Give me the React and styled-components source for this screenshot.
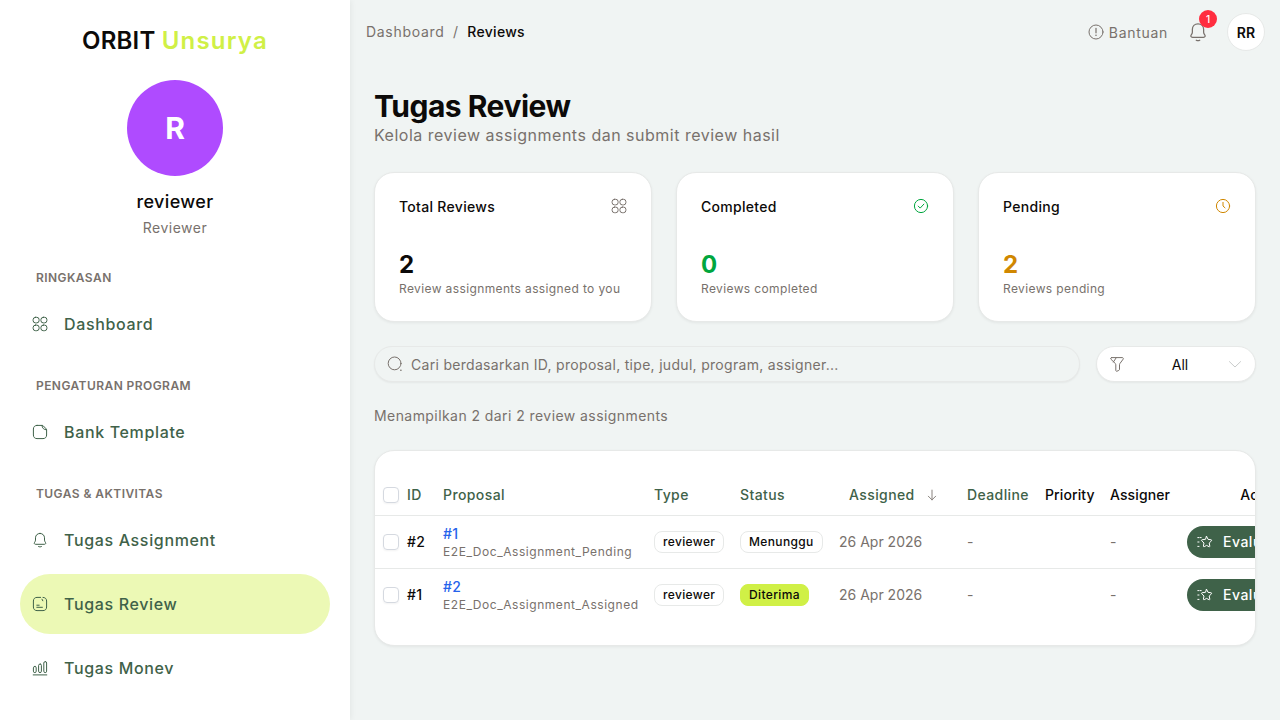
import React from "react";
import styled, { createGlobalStyle } from "styled-components";

const GlobalStyle = createGlobalStyle`
  html, body {
    margin: 0;
    height: 100%;
    overflow: hidden;
  }
  body {
    font-family: "Inter", "Open Sans", sans-serif;
    background: #f0f4f3;
    color: #0c0a09;
  }
  * {
    box-sizing: border-box;
  }
`;

const green = "#3f6249";
const gray = "#78716c";

const Svg = ({ size = 16, sw = 1, children, color }) => (
  <svg width={size} height={size} viewBox="0 0 16 16" fill="none" stroke={color || "currentColor"} strokeWidth={sw} strokeLinecap="round" strokeLinejoin="round">
    {children}
  </svg>
);

const CategoryIcon = (p) => (
  <Svg {...p}>
    <rect x="1.1" y="1.3" width="6" height="5.6" rx="2.4" />
    <rect x="8.9" y="1.3" width="6" height="5.6" rx="2.4" />
    <rect x="1.1" y="9.1" width="6" height="5.6" rx="2.4" />
    <rect x="8.9" y="9.1" width="6" height="5.6" rx="2.4" />
  </Svg>
);

const NoteIcon = (p) => (
  <Svg {...p}>
    <path d="M5 1.4h5.2c.4 0 .8.2 1.1.5l2.8 2.9c.3.3.5.7.5 1.1V11c0 2.2-1.4 3.6-3.6 3.6H5c-2.2 0-3.6-1.4-3.6-3.6V5C1.4 2.8 2.8 1.4 5 1.4z" />
    <path d="M10 1.5c0 2.6 1.8 4.3 4.5 4.3" />
  </Svg>
);

const BellIcon = (p) => (
  <Svg {...p}>
    <path d="M8 1.4C5.3 1.4 3.5 3.4 3.5 5.8v2.3c0 .8-.4 1.5-.9 2.2-.7 1-.3 2 1 2h8.8c1.3 0 1.7-1 1-2-.5-.7-.9-1.4-.9-2.2V5.8c0-2.4-1.8-4.4-4.5-4.4z" />
    <path d="M6.6 14.6c.8.4 2 .4 2.8 0" />
  </Svg>
);

const ReviewIcon = (p) => (
  <Svg {...p}>
    <path d="M8.6 1.4H5C2.8 1.4 1.4 2.8 1.4 5v6c0 2.2 1.4 3.6 3.6 3.6h6c2.2 0 3.6-1.4 3.6-3.6V5c0-2.2-1.4-3.6-3.6-3.6" />
    <path d="M10 3.2 10.8 4.8" />
    <path d="M4.8 9.2h2.4M4.8 11.3h5.6" />
  </Svg>
);

const ChartIcon = (p) => (
  <Svg {...p}>
    <rect x="1.4" y="6.4" width="2.8" height="6.2" rx="1.4" />
    <rect x="6.6" y="4" width="2.8" height="8.6" rx="1.4" />
    <rect x="11.8" y="1.6" width="2.8" height="11" rx="1.4" />
    <path d="M1.2 14.9h13.6" />
  </Svg>
);

const CheckCircleIcon = (p) => (
  <Svg {...p}>
    <circle cx="8" cy="8" r="6.6" />
    <path d="M5.2 8.1 7.2 10.1 10.9 6.1" />
  </Svg>
);

const ClockIcon = (p) => (
  <Svg {...p}>
    <circle cx="8" cy="8" r="6.6" />
    <path d="M8 4.4V8l2 1.8" />
  </Svg>
);

const SearchIcon = (p) => (
  <Svg {...p}>
    <circle cx="7.6" cy="7.4" r="6.4" />
    <path d="M13.8 14.2h.2" strokeWidth="1.4" />
  </Svg>
);

const FunnelIcon = (p) => (
  <Svg {...p}>
    <path d="M2.6 1.6h10.8c.8 0 1.2.8.8 1.5l-3.4 4.6c-.2.3-.3.6-.3 1v4.7c0 .5-.3.8-.7 1l-1.8.8c-.6.3-1.2-.2-1.2-.8V8.7c0-.4-.1-.7-.3-1L1.8 3.1c-.4-.7 0-1.5.8-1.5z" />
    <path d="M7.2 1.8 4.4 6" />
  </Svg>
);

const ChevronIcon = (p) => (
  <Svg {...p}>
    <path d="M2.4 5.6 8 11l5.6-5.4" />
  </Svg>
);

const InfoIcon = (p) => (
  <Svg {...p}>
    <circle cx="8" cy="8" r="7" />
    <path d="M8 4.4v4.4" strokeWidth="1.2" />
    <path d="M8 11.2h.01" strokeWidth="1.6" />
  </Svg>
);

const ArrowDownIcon = (p) => (
  <Svg {...p}>
    <path d="M8 2.4v11.2M3.8 9.4 8 13.6l4.2-4.2" />
  </Svg>
);

const StarIcon = (p) => (
  <Svg {...p}>
    <path d="M9.6 2.4 11 5.3l3.2.5c.5.1.7.6.3 1l-2.3 2.2.6 3.1c.1.5-.4.9-.8.6l-2.4-1.3-2.4 1.3c-.4.2-.9-.1-.8-.6l.6-3.1L4.7 6.8c-.4-.4-.2-.9.3-1l3.2-.5z" />
    <path d="M.8 3.6h3.4M.8 8h1.6M.8 12.4h1.6" strokeDasharray="1.2 1.2" />
  </Svg>
);

const Layout = styled.div`
  display: flex;
  height: 720px;
  width: 1280px;
  overflow: hidden;
`;

const Sidebar = styled.aside`
  width: 350px;
  flex: none;
  height: 100%;
  background: #fff;
  box-shadow: 1px 0 6px rgba(0, 0, 0, 0.06);
  padding: 23px 20px 0;
  display: flex;
  flex-direction: column;
  overflow: hidden;
`;

const Logo = styled.div`
  font-size: 24px;
  line-height: 36px;
  font-weight: 600;
  text-align: center;
  letter-spacing: 0.2px;
  color: #0c0a09;
  span {
    letter-spacing: 1.2px;
    color: #d0f046;
  }
`;

const Profile = styled.div`
  margin-top: 21px;
  margin-bottom: 8px;
  display: flex;
  flex-direction: column;
  align-items: center;
`;

const Avatar = styled.div`
  width: 96px;
  height: 96px;
  border-radius: 50%;
  background: #af4bff;
  color: #fff;
  font-size: 30px;
  font-weight: 700;
  display: flex;
  align-items: center;
  justify-content: center;
`;

const Name = styled.div`
  margin-top: 12px;
  font-size: 18px;
  line-height: 27px;
  font-weight: 500;
  letter-spacing: 0.37px;
`;

const Role = styled.div`
  margin-top: 2px;
  font-size: 14px;
  line-height: 21px;
  letter-spacing: 0.5px;
  color: ${gray};
`;

const SectionLabel = styled.div`
  margin: 24px 16px 8px;
  font-size: 12px;
  line-height: 16px;
  font-weight: 600;
  letter-spacing: 0.43px;
  text-transform: uppercase;
  color: ${gray};
`;

const NavItem = styled.div`
  height: 60px;
  border-radius: 30px;
  padding-left: 12px;
  display: flex;
  flex: none;
  align-items: center;
  gap: 16px;
  font-size: 16px;
  font-weight: 500;
  letter-spacing: 0.65px;
  color: ${green};
  background: ${(p) => (p.$active ? "#ecf9b5" : "transparent")};
  & + & {
    margin-top: 4px;
  }
`;

const Main = styled.main`
  flex: 1;
  min-width: 0;
`;

const Topbar = styled.header`
  height: 64px;
  padding: 0 15px 0 16px;
  display: flex;
  align-items: center;
  justify-content: space-between;
`;

const Crumbs = styled.nav`
  display: flex;
  align-items: center;
  gap: 8.5px;
  margin-top: -2px;
  font-size: 14px;
  letter-spacing: 0.7px;
  color: ${gray};
  b {
    font-weight: 500;
    letter-spacing: 0.3px;
    color: #0c0a09;
  }
`;

const TopActions = styled.div`
  display: flex;
  align-items: center;
`;

const Help = styled.div`
  display: flex;
  align-items: center;
  gap: 5px;
  font-size: 14px;
  letter-spacing: 0.7px;
  color: ${gray};
`;

const BellButton = styled.div`
  position: relative;
  margin-left: 20px;
  width: 20px;
  height: 20px;
  color: ${gray};
`;

const Badge = styled.span`
  position: absolute;
  top: -12px;
  left: 11px;
  width: 18px;
  height: 18px;
  border-radius: 50%;
  background: #ff2d3f;
  color: #fff;
  font-size: 10px;
  font-weight: 500;
  display: flex;
  align-items: center;
  justify-content: center;
`;

const UserChip = styled.div`
  margin-left: 19px;
  width: 38px;
  height: 38px;
  border-radius: 50%;
  background: #fff;
  border: 1px solid #e7e9e8;
  font-size: 14px;
  font-weight: 600;
  display: flex;
  align-items: center;
  justify-content: center;
`;

const Content = styled.div`
  padding: 24px 24px 0;
`;

const Title = styled.h1`
  margin: 0;
  font-size: 30px;
  line-height: 36px;
  font-weight: 700;
  letter-spacing: -0.5px;
`;

const Subtitle = styled.p`
  margin: -1px 0 0;
  padding-bottom: 1px;
  font-size: 16px;
  line-height: 24px;
  letter-spacing: 0.5px;
  color: ${gray};
`;

const Cards = styled.div`
  margin-top: 24px;
  display: grid;
  grid-template-columns: repeat(3, 1fr);
  gap: 24px;
`;

const Card = styled.div`
  height: 150px;
  padding: 23px 24px 24px;
  background: #fff;
  border: 1px solid #e7e9e8;
  border-radius: 20px;
  box-shadow: 0 1px 3px rgba(0, 0, 0, 0.06);
`;

const CardHead = styled.div`
  height: 20px;
  display: flex;
  align-items: center;
  justify-content: space-between;
  font-size: 14px;
  font-weight: 500;
  letter-spacing: 0.3px;
  color: ${(p) => p.$color || "#0c0a09"};
  span {
    color: #0c0a09;
  }
`;

const CardValue = styled.div`
  margin-top: 33px;
  font-size: 24px;
  line-height: 32px;
  font-weight: 700;
  color: ${(p) => p.$color || "#0c0a09"};
`;

const CardNote = styled.div`
  font-size: 12px;
  line-height: 16px;
  letter-spacing: 0.38px;
  color: ${gray};
`;

const Filters = styled.div`
  margin-top: 24px;
  display: flex;
  gap: 16px;
`;

const SearchBox = styled.div`
  flex: 1;
  height: 36px;
  padding: 0 12px;
  display: flex;
  align-items: center;
  gap: 8px;
  border: 1px solid #e7e9e8;
  border-radius: 18px;
  background: #f0f4f3;
  box-shadow: 0 1px 2px rgba(0, 0, 0, 0.05);
  font-size: 14px;
  letter-spacing: 0.3px;
  color: ${gray};
`;

const Select = styled.div`
  width: 160px;
  height: 36px;
  padding: 0 12px;
  display: flex;
  align-items: center;
  justify-content: space-between;
  background: #fff;
  border: 1px solid #e7e9e8;
  border-radius: 18px;
  box-shadow: 0 1px 2px rgba(0, 0, 0, 0.05);
  font-size: 14px;
  color: #0c0a09;
`;

const SelectValue = styled.span`
  margin-left: 8px;
`;

const Summary = styled.p`
  margin: 24px 0;
  font-size: 14px;
  line-height: 20px;
  letter-spacing: 0.43px;
  color: ${gray};
`;

const TableCard = styled.div`
  padding: 24px 0;
  background: #fff;
  border: 1px solid #e7e9e8;
  border-radius: 20px;
  box-shadow: 0 1px 3px rgba(0, 0, 0, 0.06);
  overflow: hidden;
`;

const Table = styled.table`
  width: 978px;
  table-layout: fixed;
  border-collapse: collapse;
  font-size: 14px;
`;

const Th = styled.th`
  height: 40px;
  padding: 0 ${(p) => (p.$tight ? "0" : "8px")} 0 8px;
  text-align: ${(p) => p.$align || "left"};
  font-weight: 500;
  white-space: nowrap;
  letter-spacing: ${(p) => (p.$dark ? "0.1px" : "0.4px")};
  color: ${(p) => (p.$dark ? "#0c0a09" : green)};
  border-bottom: 1px solid #e7e9e8;
`;

const SortLabel = styled.span`
  display: inline-flex;
  align-items: center;
  gap: 10px;
  padding-left: 10px;
`;

const Td = styled.td`
  height: 53px;
  padding: 0 ${(p) => (p.$tight ? "0" : "8px")} 0 8px;
  white-space: nowrap;
  font-weight: ${(p) => (p.$medium ? 500 : 400)};
  letter-spacing: ${(p) => (p.$medium ? "0.4px" : "0")};
  color: ${(p) => p.$color || "#0c0a09"};
  border-bottom: ${(p) => (p.$last ? "none" : "1px solid #e7e9e8")};
`;

const Check = styled.div`
  width: 16px;
  height: 16px;
  border: 1px solid #d5d9e0;
  border-radius: 4px;
  box-shadow: 0 1px 2px rgba(0, 0, 0, 0.05);
`;

const ProposalLink = styled.div`
  font-size: 14px;
  line-height: 20px;
  font-weight: 500;
  letter-spacing: 0.4px;
  color: #2563eb;
`;

const ProposalName = styled.div`
  font-size: 12px;
  line-height: 16px;
  letter-spacing: 0.55px;
  color: ${gray};
`;

const Pill = styled.span`
  display: inline-block;
  padding: 0 8px;
  height: 22px;
  line-height: 20px;
  font-size: 12px;
  font-weight: 500;
  letter-spacing: 0.36px;
  border-radius: 8px;
  color: #0c0a09;
  border: 1px solid ${(p) => (p.$lime ? "#d0f046" : "#e7e9e8")};
  background: ${(p) => (p.$lime ? "#d0f046" : "#fff")};
`;

const EvalButton = styled.div`
  width: 120px;
  height: 32px;
  padding-left: 10px;
  display: flex;
  align-items: center;
  gap: 10px;
  border-radius: 16px;
  background: ${green};
  color: #fff;
  font-size: 14px;
  font-weight: 500;
  letter-spacing: 0.5px;
`;

const groups = [
  { label: "Ringkasan", items: [{ name: "Dashboard", Icon: CategoryIcon }] },
  { label: "Pengaturan Program", items: [{ name: "Bank Template", Icon: NoteIcon }] },
  {
    label: "Tugas & Aktivitas",
    items: [
      { name: "Tugas Assignment", Icon: BellIcon },
      { name: "Tugas Review", Icon: ReviewIcon, active: true },
      { name: "Tugas Monev", Icon: ChartIcon },
    ],
  },
];

const stats = [
  { title: "Total Reviews", value: "2", note: "Review assignments assigned to you", Icon: CategoryIcon, iconColor: gray },
  { title: "Completed", value: "0", note: "Reviews completed", Icon: CheckCircleIcon, iconColor: "#00a63e", color: "#00a63e" },
  { title: "Pending", value: "2", note: "Reviews pending", Icon: ClockIcon, iconColor: "#d08700", color: "#d08700" },
];

const rows = [
  { id: "#2", link: "#1", name: "E2E_Doc_Assignment_Pending", status: "Menunggu" },
  { id: "#1", link: "#2", name: "E2E_Doc_Assignment_Assigned", status: "Diterima", lime: true, last: true },
];

const colWidths = [24, 36, 211, 86, 99, 128, 78, 65, 77, 174];

export default function App() {
  return (
    <>
      <GlobalStyle />
      <Layout>
        <Sidebar>
          <Logo>
            ORBIT <span>Unsurya</span>
          </Logo>
          <Profile>
            <Avatar>R</Avatar>
            <Name>reviewer</Name>
            <Role>Reviewer</Role>
          </Profile>
          {groups.map((g) => (
            <React.Fragment key={g.label}>
              <SectionLabel>{g.label}</SectionLabel>
              {g.items.map(({ name, Icon, active }) => (
                <NavItem key={name} $active={active}>
                  <Icon />
                  {name}
                </NavItem>
              ))}
            </React.Fragment>
          ))}
        </Sidebar>
        <Main>
          <Topbar>
            <Crumbs>
              <span>Dashboard</span>
              <span>/</span>
              <b>Reviews</b>
            </Crumbs>
            <TopActions>
              <Help>
                <InfoIcon />
                Bantuan
              </Help>
              <BellButton>
                <BellIcon size={20} />
                <Badge>1</Badge>
              </BellButton>
              <UserChip>RR</UserChip>
            </TopActions>
          </Topbar>
          <Content>
            <Title>Tugas Review</Title>
            <Subtitle>Kelola review assignments dan submit review hasil</Subtitle>
            <Cards>
              {stats.map(({ title, value, note, Icon, iconColor, color }) => (
                <Card key={title}>
                  <CardHead $color={iconColor}>
                    <span>{title}</span>
                    <Icon />
                  </CardHead>
                  <CardValue $color={color}>{value}</CardValue>
                  <CardNote>{note}</CardNote>
                </Card>
              ))}
            </Cards>
            <Filters>
              <SearchBox>
                <SearchIcon />
                Cari berdasarkan ID, proposal, tipe, judul, program, assigner...
              </SearchBox>
              <Select>
                <FunnelIcon color={gray} />
                <SelectValue>All</SelectValue>
                <ChevronIcon color="#c9cccb" />
              </Select>
            </Filters>
            <Summary>Menampilkan 2 dari 2 review assignments</Summary>
            <TableCard>
              <Table>
                <colgroup>
                  {colWidths.map((w, i) => (
                    <col key={i} width={w} />
                  ))}
                </colgroup>
                <thead>
                  <tr>
                    <Th $tight><Check /></Th>
                    <Th>ID</Th>
                    <Th>Proposal</Th>
                    <Th>Type</Th>
                    <Th>Status</Th>
                    <Th>
                      <SortLabel>
                        Assigned
                        <ArrowDownIcon color={gray} size={14} />
                      </SortLabel>
                    </Th>
                    <Th>Deadline</Th>
                    <Th $dark>Priority</Th>
                    <Th $dark>Assigner</Th>
                    <Th $dark $align="center">Actions</Th>
                  </tr>
                </thead>
                <tbody>
                  {rows.map((r) => (
                    <tr key={r.id}>
                      <Td $tight $last={r.last}><Check /></Td>
                      <Td $medium $last={r.last}>{r.id}</Td>
                      <Td $last={r.last}>
                        <ProposalLink>{r.link}</ProposalLink>
                        <ProposalName>{r.name}</ProposalName>
                      </Td>
                      <Td $last={r.last}><Pill>reviewer</Pill></Td>
                      <Td $last={r.last}><Pill $lime={r.lime}>{r.status}</Pill></Td>
                      <Td $last={r.last} $color={gray}>26 Apr 2026</Td>
                      <Td $last={r.last} $color={gray}>-</Td>
                      <Td $last={r.last} />
                      <Td $last={r.last} $color={gray}>-</Td>
                      <Td $last={r.last}>
                        <EvalButton>
                          <StarIcon />
                          Evaluasi
                        </EvalButton>
                      </Td>
                    </tr>
                  ))}
                </tbody>
              </Table>
            </TableCard>
          </Content>
        </Main>
      </Layout>
    </>
  );
}
